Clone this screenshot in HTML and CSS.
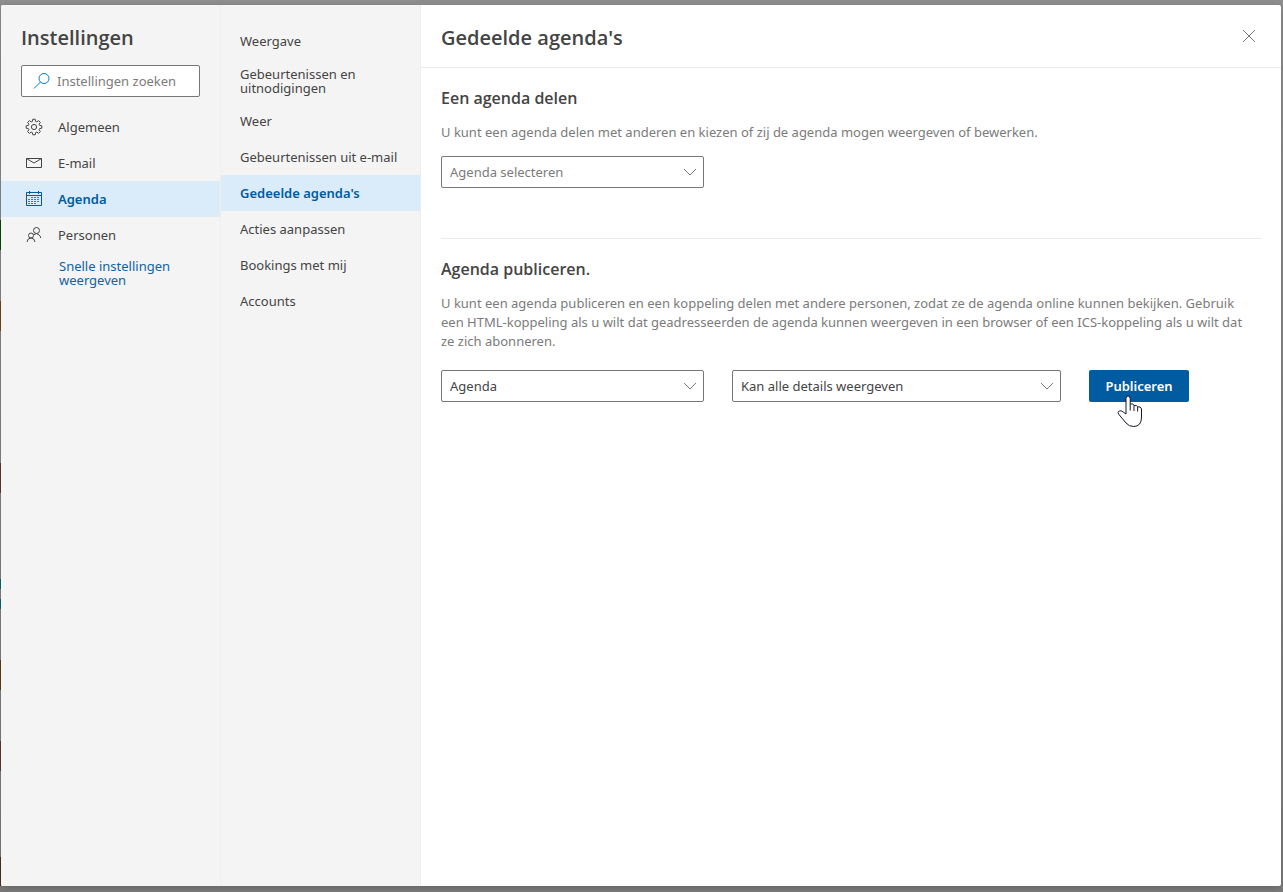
FILE: index.html
```html
<!DOCTYPE html>
<html lang="nl">
<head>
<meta charset="utf-8">
<meta name="viewport" content="width=device-width, initial-scale=1">
<title>Instellingen</title>
<link rel="stylesheet" href="styles.css">
</head>
<body>
<div class="dialog" role="dialog" aria-label="Instellingen">
  <aside class="categories">
    <h1 class="title">Instellingen</h1>
    <label class="search">
      <svg class="search-icon" width="18" height="18" viewBox="0 0 18 18" aria-hidden="true"><circle cx="11" cy="6.5" r="5"/><path d="M7.500 10 1 16.500"/></svg>
      <input class="search-input" type="text" placeholder="Instellingen zoeken" aria-label="Instellingen zoeken">
    </label>
    <nav class="category-list" aria-label="Categorieën">
      <button class="category" type="button">
        <svg class="icon" width="18" height="18" viewBox="0 0 18 18" aria-hidden="true"><path d="M7.800 1.200h2.400l.4 2.200 1.200.5 1.800-1.300 1.800 1.800-1.300 1.800.5 1.200 2.200.4v2.400l-2.200.4-.5 1.200 1.300 1.800-1.800 1.800-1.800-1.300-1.200.5-.4 2.200H7.800l-.4-2.200-1.200-.5-1.800 1.300-1.800-1.800 1.300-1.800-.5-1.200-2.200-.4V7.800l2.200-.4.5-1.200-1.300-1.800 1.800-1.800 1.800 1.300 1.200-.5z"/><circle cx="9" cy="9" r="2.600"/></svg>
        Algemeen
      </button>
      <button class="category" type="button">
        <svg class="icon" width="18" height="18" viewBox="0 0 18 18" aria-hidden="true"><path d="M1.500 4.500h15v9h-15zM1.500 4.500 9 9l7.500-4.500"/></svg>
        E-mail
      </button>
      <button class="category category-active" type="button" aria-current="true">
        <svg class="icon" width="18" height="18" viewBox="0 0 18 18" aria-hidden="true"><path d="M1.500 2.500h15v13h-15zM1.500 5.500h15M4.500 1v3M13.500 1v3"/><path d="M6 7.500h9M3 9.500h12M3 11.500h12M3 13.500h9" stroke-dasharray="2 1" stroke-opacity=".75"/></svg>
        Agenda
      </button>
      <button class="category" type="button">
        <svg class="icon" width="18" height="18" viewBox="0 0 18 18" aria-hidden="true"><circle cx="11.500" cy="4.500" r="3"/><circle cx="6" cy="9.500" r="2.500"/><path d="M8.200 9q3.300-3 6 0 1.300 1 1.500 3M2 16q.5-4 4-4t4 4"/></svg>
        Personen
      </button>
    </nav>
    <a class="quick-link" href="#">Snelle instellingen weergeven</a>
  </aside>
  <nav class="sections" aria-label="Agenda">
    <button class="section" type="button">Weergave</button>
    <button class="section section-wrap" type="button">Gebeurtenissen en uitnodigingen</button>
    <button class="section" type="button">Weer</button>
    <button class="section" type="button">Gebeurtenissen uit e-mail</button>
    <button class="section section-active" type="button" aria-current="true">Gedeelde agenda's</button>
    <button class="section" type="button">Acties aanpassen</button>
    <button class="section" type="button">Bookings met mij</button>
    <button class="section" type="button">Accounts</button>
  </nav>
  <main class="content">
    <header class="content-header">
      <h2 class="title">Gedeelde agenda's</h2>
      <button class="close" type="button" aria-label="Sluiten">
        <svg width="14" height="14" viewBox="0 0 14 14" aria-hidden="true"><path d="M1 1l12 12M13 1 1 13"/></svg>
      </button>
    </header>
    <section class="panel">
      <h3 class="heading">Een agenda delen</h3>
      <p class="text">U kunt een agenda delen met anderen en kiezen of zij de agenda mogen weergeven of bewerken.</p>
      <div class="row">
        <div class="dropdown">
          <select class="select select-empty" aria-label="Agenda selecteren"><option>Agenda selecteren</option></select>
          <svg class="chevron" width="12" height="8" viewBox="0 0 12 8" aria-hidden="true"><path d="M0 1l6 6 6-6"/></svg>
        </div>
      </div>
    </section>
    <section class="panel panel-publish">
      <h3 class="heading">Agenda publiceren.</h3>
      <p class="text">U kunt een agenda publiceren en een koppeling delen met andere personen, zodat ze de agenda online kunnen bekijken. Gebruik een HTML-koppeling als u wilt dat geadresseerden de agenda kunnen weergeven in een browser of een ICS-koppeling als u wilt dat ze zich abonneren.</p>
      <div class="row">
        <div class="dropdown">
          <select class="select" aria-label="Agenda"><option>Agenda</option></select>
          <svg class="chevron" width="12" height="8" viewBox="0 0 12 8" aria-hidden="true"><path d="M0 1l6 6 6-6"/></svg>
        </div>
        <div class="dropdown dropdown-wide">
          <select class="select" aria-label="Machtigingen"><option>Kan alle details weergeven</option></select>
          <svg class="chevron" width="12" height="8" viewBox="0 0 12 8" aria-hidden="true"><path d="M0 1l6 6 6-6"/></svg>
        </div>
        <div class="publish-wrap">
          <button class="publish" type="button">Publiceren</button>
          <svg class="pointer" width="26" height="33" viewBox="0 0 26 33" aria-hidden="true"><path d="M9 19V3.500Q9 1 11 1t2.200 2.500V9q3.300-.8 3.800 1.500 3-.8 3.600 1.300 3.400-.6 3.900 2.200V22q0 9.500-8 9.500-4.500 0-7.500-3.500L1.500 19q-1.300-2 .7-3 2.300-.8 4 1z"/><path d="M13.200 9v6.500M17 10.500V16M20.600 12v4.500"/></svg>
        </div>
      </div>
    </section>
  </main>
</div>
</body>
</html>
```
FILE: styles.css
```css
* {
  box-sizing: border-box;
}

body {
  margin: 0;
  min-height: 100vh;
  display: flex;
  padding: 5px 2px 6px 1px;
  /* dimmed calendar behind the dialog: event colours on the left edge */
  background:
    linear-gradient(
      transparent 220px, #034a03 220px 250px,
      transparent 250px 301px, #84400f 301px 331px,
      transparent 331px 463px, #5c3a30 463px 493px,
      transparent 493px 579px, #046a70 579px 589px,
      transparent 589px 599px, #046a70 599px 609px,
      transparent 609px 660px, #5f4010 660px 690px,
      transparent 690px 741px, #5c3a30 741px 771px,
      transparent 771px 857px, #4f2f25 857px 886px,
      transparent 886px
    ) left top / 1px 100% no-repeat,
    linear-gradient(#8f8f8f, #868686 50%, #7c7c7c);
  font-family: "Noto Sans", "Open Sans", sans-serif;
  font-size: 13px;
  color: #444;
}

button,
input,
select {
  font: inherit;
  color: inherit;
}

h1, h2, h3, p {
  margin: 0;
}

.dialog {
  flex: 1;
  display: flex;
  border-radius: 2px;
  background: #fff;
  overflow: hidden;
  box-shadow: 0 2px 8px rgba(0, 0, 0, 0.2);
}

.categories,
.sections {
  flex: none;
  display: flex;
  flex-direction: column;
  background: #f4f4f4;
  border-right: 1px solid #eee;
}

.categories {
  width: 220px;
}

.sections {
  width: 200px;
  padding-top: 18px;
}

.title,
.heading {
  font-family: "Open Sans", "Noto Sans", sans-serif;
  font-weight: 600;
}

.title {
  font-size: 20px;
  line-height: 24px;
}

.categories .title {
  margin: 21px 20px 15px;
}

.search {
  display: flex;
  align-items: center;
  gap: 6px;
  height: 32px;
  margin: 0 20px 12px;
  padding: 0 11px;
  border: 1px solid #777;
  border-radius: 2px;
  background: #fff;
}

.search-icon {
  flex: none;
  fill: none;
  stroke: #0078d4;
}

.search-input {
  flex: 1;
  min-width: 0;
  padding: 0;
  border: 0;
  outline: 0;
  background: none;
}

.search-input::placeholder {
  color: #7b7b7b;
}

.category-list {
  display: flex;
  flex-direction: column;
}

.category,
.section {
  display: flex;
  align-items: center;
  min-height: 36px;
  padding: 0 19px;
  border: 0;
  background: none;
  text-align: left;
  line-height: 14px;
}

.category {
  gap: 15px;
  padding: 0 24px;
}

.icon {
  flex: none;
  fill: none;
  stroke: currentColor;
}

.category-active,
.section-active {
  background: #daebf9;
  color: #005ba1;
  font-weight: 600;
}

.section-wrap {
  min-height: 44px;
}

.quick-link {
  margin: 6px 40px 0 58px;
  line-height: 14px;
  color: #0f63a5;
  text-decoration: none;
}

.content {
  flex: 1;
  min-width: 0;
}

.content-header {
  display: flex;
  align-items: center;
  justify-content: space-between;
  height: 63px;
  padding: 4px 19px 0 20px;
  border-bottom: 1px solid #eaeaea;
}

.close {
  display: flex;
  align-items: center;
  justify-content: center;
  width: 26px;
  height: 32px;
  padding: 0 0 4px;
  border: 0;
  background: none;
}

.close svg {
  fill: none;
  stroke: #777;
}

.panel {
  margin: 0 20px;
  padding: 20px 0;
}

.panel-publish {
  margin-top: 30px;
  border-top: 1px solid #eaeaea;
}

.heading {
  font-size: 16px;
  line-height: 20px;
}

.text {
  margin: 15px 0 14px;
  padding-right: 8px;
  line-height: 19px;
  color: #7b7b7b;
}

.panel-publish .text {
  margin-bottom: 19px;
}

.row {
  display: flex;
  flex-wrap: wrap;
  gap: 28px;
}

.dropdown {
  position: relative;
  width: 263px;
}

.dropdown-wide {
  width: 329px;
}

.select {
  display: block;
  appearance: none;
  width: 100%;
  height: 32px;
  padding: 0 28px 0 8px;
  border: 1px solid #777;
  border-radius: 2px;
  background: #fff;
}

.select-empty {
  color: #7b7b7b;
}

.chevron {
  position: absolute;
  top: 12px;
  right: 8px;
  fill: none;
  stroke: #777;
  pointer-events: none;
}

.publish-wrap {
  position: relative;
}

.publish {
  height: 32px;
  width: 100px;
  padding: 0;
  border: 0;
  border-radius: 2px;
  background: #005ba1;
  color: #fff;
  font-weight: 600;
}

.pointer {
  position: absolute;
  left: 28px;
  top: 25px;
  fill: #fff;
  stroke: #171728;
  pointer-events: none;
}
```
